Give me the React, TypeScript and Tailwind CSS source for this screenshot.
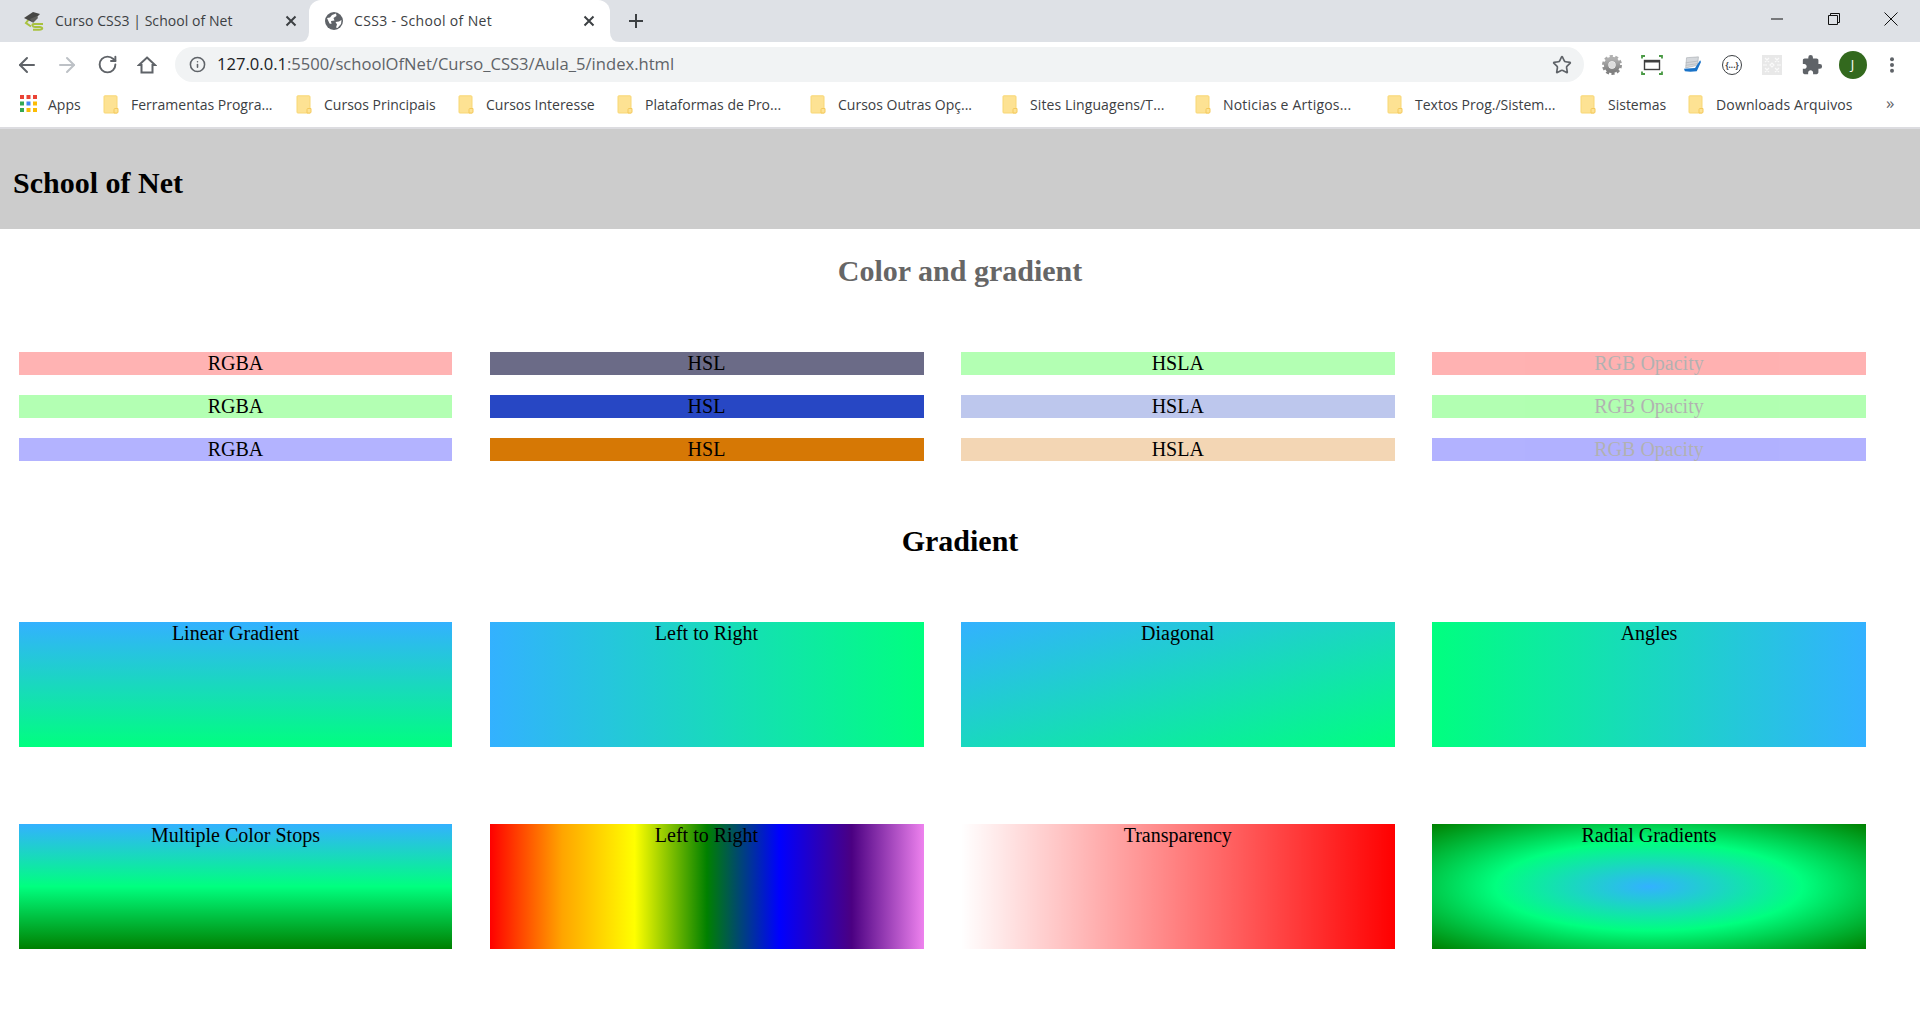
import React from "react";
import { ArrowLeft, ArrowRight, RotateCw, Info, Star } from "lucide-react";
import { MdExtension } from "react-icons/md";

const Folder = () => (
  <svg width="16" height="19" viewBox="0 0 16 19" className="shrink-0">
    <path d="M1 1.5 Q1 .8 1.8 .8 H13 Q14 .8 14 1.8 V18 H1.8 Q1 18 1 17.2 Z" fill="#fde293" stroke="#f8d775" strokeWidth="1" />
    <path d="M11 18 V14.5 Q11 13.5 12 13.5 H15 V17 Q15 18 14 18 Z" fill="#fde293" stroke="#f4c95d" strokeWidth="1" />
  </svg>
);

const AppsIcon = () => (
  <svg width="18" height="18" viewBox="0 0 18 18" className="shrink-0">
    <rect x="0" y="0" width="4" height="4" fill="#ea4335" />
    <rect x="6.5" y="0" width="4" height="4" fill="#ea4335" />
    <rect x="13" y="0" width="4" height="4" fill="#ea4335" />
    <rect x="0" y="6.5" width="4" height="4" fill="#34a853" />
    <rect x="6.5" y="6.5" width="4" height="4" fill="#4285f4" />
    <rect x="13" y="6.5" width="4" height="4" fill="#fbbc05" />
    <rect x="0" y="13" width="4" height="4" fill="#34a853" />
    <rect x="6.5" y="13" width="4" height="4" fill="#fbbc05" />
    <rect x="13" y="13" width="4" height="4" fill="#fbbc05" />
  </svg>
);

const CapIcon = () => (
  <svg width="22" height="20" viewBox="0 0 22 20" className="shrink-0">
    <path d="M5 8 L2 12 L7 15.5" fill="none" stroke="#a9c23f" strokeWidth="2" />
    <path d="M19 13 H10 Q8 13 8.5 14.5 Q9 16 11 16 H16 Q19 16.5 18 18 Q17 18.7 15 18.7 H9" fill="none" stroke="#a9c23f" strokeWidth="2" />
    <path d="M0 7 L9 1 L16 3 L8 11 Z" fill="#474745" />
    <path d="M6 8 L9 12 L14 7 L13 5 Z" fill="#5e5e5a" />
  </svg>
);

const GlobeIcon = () => (
  <svg width="18" height="18" viewBox="0 0 18 18" className="shrink-0">
    <circle cx="9" cy="9" r="9" fill="#5f6368" />
    <path d="M2 6 L5 5.5 L7 3 L11 1.5 L11.5 4 L8.5 6 L9.5 8.5 L6 9 L6.5 12 L4.5 11.5 Z" fill="#fff" />
    <path d="M10.5 10 L14 9.5 L16.5 8 L16 12 L12.5 16 L11 15.5 L12 12.5 Z" fill="#fff" />
  </svg>
);

const CloseX = () => (
  <svg width="12" height="12" viewBox="0 0 12 12">
    <path d="M1.5 1.5 L10.5 10.5 M10.5 1.5 L1.5 10.5" stroke="#3c4043" strokeWidth="2" />
  </svg>
);

const Gear = () => (
  <svg width="20" height="20" viewBox="0 0 22 22">
    <defs>
      <linearGradient id="gearg" x1="0" y1="0" x2="0" y2="1">
        <stop offset="0" stopColor="#b0b0b0" />
        <stop offset="1" stopColor="#7f7f7f" />
      </linearGradient>
    </defs>
    <circle cx="11" cy="11" r="9.5" fill="none" stroke="url(#gearg)" strokeWidth="3" strokeDasharray="3.4 2.6" />
    <circle cx="11" cy="11" r="6.5" fill="none" stroke="url(#gearg)" strokeWidth="5" />
    <circle cx="11" cy="11" r="3.5" fill="#dddddd" />
  </svg>
);

const FrameIcon = () => (
  <svg width="22" height="20" viewBox="0 0 22 20">
    <path d="M1 3.5 V1 H4 M18 1 H21 V3.5 M1 16.5 V19 H4 M18 19 H21 V16.5" fill="none" stroke="#4a9a45" strokeWidth="1.8" />
    <rect x="3.5" y="5.5" width="15" height="9" fill="#fff" stroke="#3f3f3f" strokeWidth="1.4" />
    <rect x="3.5" y="5.5" width="15" height="2" fill="#3f3f3f" />
  </svg>
);

const BookIcon = () => (
  <svg width="19" height="17" viewBox="0 0 22 20">
    <path d="M4 2 L18 1 L17 11 L3 14 Z" fill="#d5d8dc" stroke="#9aa0a6" strokeWidth=".6" />
    <path d="M3 8 L17 6 M3 11 L17 9" stroke="#b0b4b8" strokeWidth=".8" />
    <path d="M1 15 L14 14 L20 5 L21 7 L16 18 Q8 19 2 18 Z" fill="#1a73c8" />
  </svg>
);

const CircleCode = () => (
  <div className="w-[20px] h-[20px] rounded-full border-[1.5px] border-[#3c4043] flex items-center justify-center">
    <span className="text-[8px] leading-none font-bold text-[#3c4043]">{"{...}"}</span>
  </div>
);

const PatternBox = () => (
  <svg width="20" height="20" viewBox="0 0 20 20">
    <rect width="20" height="20" fill="#e8e8e8" />
    <path d="M3 3 L7 7 M7 3 L3 7 M13 3 L17 7 M17 3 L13 7 M3 13 L7 17 M7 13 L3 17 M13 13 L17 17 M17 13 L13 17 M8 10 L10 8 L12 10 L10 12 Z M1 10 H5 M15 10 H19" stroke="#fafafa" strokeWidth="1.2" fill="none" />
  </svg>
);

const Dots = () => (
  <svg width="6" height="16" viewBox="0 0 6 16">
    <circle cx="3" cy="2.2" r="2" fill="#5f6368" />
    <circle cx="3" cy="8" r="2" fill="#5f6368" />
    <circle cx="3" cy="13.8" r="2" fill="#5f6368" />
  </svg>
);

const HomeIcon = () => (
  <svg width="20" height="20" viewBox="0 0 20 20">
    <path d="M10 2.5 L18 10 H15.5 V17.5 H4.5 V10 H2 Z" fill="none" stroke="#5f6368" strokeWidth="2" strokeLinejoin="miter" />
  </svg>
);

function Bookmark({ label, className }: { label: string; className: string }) {
  return (
    <div className={"flex items-center gap-[12px] shrink-0 " + className}>
      <Folder />
      <span className="whitespace-nowrap">{label}</span>
    </div>
  );
}

function Bar({ label, className }: { label: string; className: string }) {
  return <div className={"text-center text-[20px] leading-[23px] text-black " + className}>{label}</div>;
}

function GBox({ label, className }: { label: string; className: string }) {
  return <div className={"h-[125px] text-center text-[20px] leading-[23px] text-black " + className}>{label}</div>;
}

export default function App() {
  return (
    <div className="min-h-[1030px] bg-white font-['Liberation_Serif',serif]">
      <div className="font-['Open_Sans',sans-serif]">
        {/* tab strip */}
        <div className="h-[42px] bg-[#dee1e6] flex items-end pl-[12px] text-[#3c4043] text-[14px]">
          <div className="w-[297px] h-[42px] flex items-center pl-[12px] pr-[12px]">
            <CapIcon />
            <span className="ml-[9px] whitespace-nowrap flex-1 pb-[2px] tracking-[.05px]">Curso CSS3 | School of Net</span>
            <CloseX />
          </div>
          <div className="relative w-[301px] h-[42px] bg-white rounded-t-[12px] flex items-center pl-[16px] pr-[15px]">
            <GlobeIcon />
            <span className="ml-[11px] whitespace-nowrap flex-1 pb-[2px] tracking-[.35px]">CSS3 - School of Net</span>
            <CloseX />
            <svg width="10" height="10" viewBox="0 0 10 10" className="absolute left-[-10px] bottom-0">
              <path d="M10 0 V10 H0 Q10 10 10 0 Z" fill="#fff" />
            </svg>
            <svg width="10" height="10" viewBox="0 0 10 10" className="absolute right-[-10px] bottom-0">
              <path d="M0 0 V10 H10 Q0 10 0 0 Z" fill="#fff" />
            </svg>
          </div>
          <div className="h-[42px] flex items-center ml-[18px]">
            <svg width="16" height="16" viewBox="0 0 16 16">
              <path d="M8 1 V15 M1 8 H15" stroke="#3c4043" strokeWidth="2" />
            </svg>
          </div>
          <div className="ml-auto h-[42px] flex items-center pb-[4px]">
            <svg width="12" height="12" viewBox="0 0 12 12" className="mr-[45px]">
              <path d="M0 6 H12" stroke="#111" strokeWidth="1" />
            </svg>
            <svg width="12" height="12" viewBox="0 0 12 12" className="mr-[44px]">
              <path d="M2.5 2.5 V.5 H11.5 V9.5 H9.5 M.5 2.5 H9.5 V11.5 H.5 Z" fill="none" stroke="#111" strokeWidth="1" />
            </svg>
            <svg width="14" height="14" viewBox="0 0 14 14" className="mr-[22px]">
              <path d="M.5 .5 L13.5 13.5 M13.5 .5 L.5 13.5" stroke="#111" strokeWidth="1" />
            </svg>
          </div>
        </div>
        {/* toolbar */}
        <div className="h-[40px] flex items-end">
          <div className="h-[40px] flex items-center pl-[15px] w-[175px] pt-[5px]">
            <ArrowLeft size={24} color="#5f6368" strokeWidth={2} />
            <ArrowRight size={24} color="#bdc1c6" strokeWidth={2} className="ml-[16px]" />
            <RotateCw size={21} color="#5f6368" strokeWidth={2.2} className="ml-[18px]" />
            <div className="ml-[19px]"><HomeIcon /></div>
          </div>
          <div className="w-[1409px] h-[35px] bg-[#f1f3f4] rounded-full flex items-center pl-[14px] pr-[12px]">
            <Info size={17} color="#5f6368" strokeWidth={2.2} className="shrink-0" />
            <span className="ml-[11px] text-[16.6px] whitespace-nowrap text-[#5f6368] flex-1">
              <span className="text-[#202124]">127.0.0.1</span>:5500/schoolOfNet/Curso_CSS3/Aula_5/index.html
            </span>
            <Star size={20} color="#5f6368" strokeWidth={2} className="shrink-0" />
          </div>
          <div className="flex-1 h-[35px] flex items-center">
            <div className="w-[40px] ml-[8px] flex justify-center"><Gear /></div>
            <div className="w-[40px] flex justify-center"><FrameIcon /></div>
            <div className="w-[40px] flex justify-center"><BookIcon /></div>
            <div className="w-[40px] flex justify-center"><CircleCode /></div>
            <div className="w-[40px] flex justify-center"><PatternBox /></div>
            <div className="w-[40px] flex justify-center"><MdExtension size={22} color="#5f6368" /></div>
            <div className="w-[41px] flex justify-center">
              <div className="w-[28px] h-[28px] rounded-full bg-[#33691e] text-white text-[13px] flex items-center justify-center">J</div>
            </div>
            <div className="w-[38px] flex justify-center"><Dots /></div>
          </div>
        </div>
        {/* bookmarks */}
        <div className="h-[47px] border-b-2 border-[#dcdce0] flex items-center pl-[20px] pb-[1px] text-[14px] text-[#3c4043]">
          <div className="w-[83px] flex items-center gap-[10px] shrink-0">
            <AppsIcon />
            <span>Apps</span>
          </div>
          <Bookmark label="Ferramentas Progra..." className="w-[193px]" />
          <Bookmark label="Cursos Principais" className="w-[162px]" />
          <Bookmark label="Cursos Interesse" className="w-[159px]" />
          <Bookmark label="Plataformas de Pro..." className="w-[193px]" />
          <Bookmark label="Cursos Outras Opç..." className="w-[192px]" />
          <Bookmark label="Sites Linguagens/T..." className="w-[193px] tracking-[.1px]" />
          <Bookmark label="Noticias e Artigos..." className="w-[192px] tracking-[.2px]" />
          <Bookmark label="Textos Prog./Sistem..." className="w-[193px]" />
          <Bookmark label="Sistemas" className="w-[108px]" />
          <Bookmark label="Downloads Arquivos" className="w-[200px] tracking-[.15px]" />
          <span className="text-[17px] leading-none text-[#5f6368] ml-[-2px] pb-[3px]">»</span>
        </div>
      </div>

      {/* page */}
      <header className="h-[100px] bg-[#cccccc] flex items-center pl-[13px] pt-[7px]">
        <h1 className="text-[30px] font-bold text-black">School of Net</h1>
      </header>

      <h2 className="mt-[25px] text-center text-[30px] leading-[34px] font-bold text-[#666666]">Color and gradient</h2>

      <div className="mt-[64px] ml-[19px] grid grid-cols-[433px_434px_433.5px_434px] gap-x-[37.5px] gap-y-[20px]">
        <Bar label="RGBA" className="bg-[#ffb3b3]" />
        <Bar label="HSL" className="bg-[#6b6b87]" />
        <Bar label="HSLA" className="bg-[#b3ffb3]" />
        <Bar label="RGB Opacity" className="bg-[#ff0000] opacity-30" />
        <Bar label="RGBA" className="bg-[#b3ffb3]" />
        <Bar label="HSL" className="bg-[#2747c4]" />
        <Bar label="HSLA" className="bg-[#bdc7ed]" />
        <Bar label="RGB Opacity" className="bg-[#00ff00] opacity-30" />
        <Bar label="RGBA" className="bg-[#b3b3ff]" />
        <Bar label="HSL" className="bg-[#d67805]" />
        <Bar label="HSLA" className="bg-[#f3d6b4]" />
        <Bar label="RGB Opacity" className="bg-[#0000ff] opacity-30" />
      </div>

      <h2 className="mt-[63px] text-center text-[30px] leading-[34px] font-bold text-black">Gradient</h2>

      <div className="mt-[64px] ml-[19px] grid grid-cols-[433px_434px_433.5px_434px] gap-x-[37.5px] gap-y-[77px]">
        <GBox label="Linear Gradient" className="bg-[linear-gradient(#33b1ff,#00ff7f)]" />
        <GBox label="Left to Right" className="bg-[linear-gradient(to_right,#33b1ff,#00ff7f)]" />
        <GBox label="Diagonal" className="bg-[linear-gradient(to_bottom_right,#33b1ff,#00ff7f)]" />
        <GBox label="Angles" className="bg-[linear-gradient(-90deg,#33b1ff,#00ff7f)]" />
        <GBox label="Multiple Color Stops" className="bg-[linear-gradient(#33b1ff,#00ff7f,#008000)]" />
        <GBox label="Left to Right" className="bg-[linear-gradient(to_right,#ff0000,#ffa500,#ffff00,#008000,#0000ff,#4b0082,#ee82ee)]" />
        <GBox label="Transparency" className="bg-[linear-gradient(to_right,rgba(255,0,0,0),#ff0000)]" />
        <GBox label="Radial Gradients" className="bg-[radial-gradient(#33b1ff,#00ff7f,#008000)]" />
      </div>
    </div>
  );
}
